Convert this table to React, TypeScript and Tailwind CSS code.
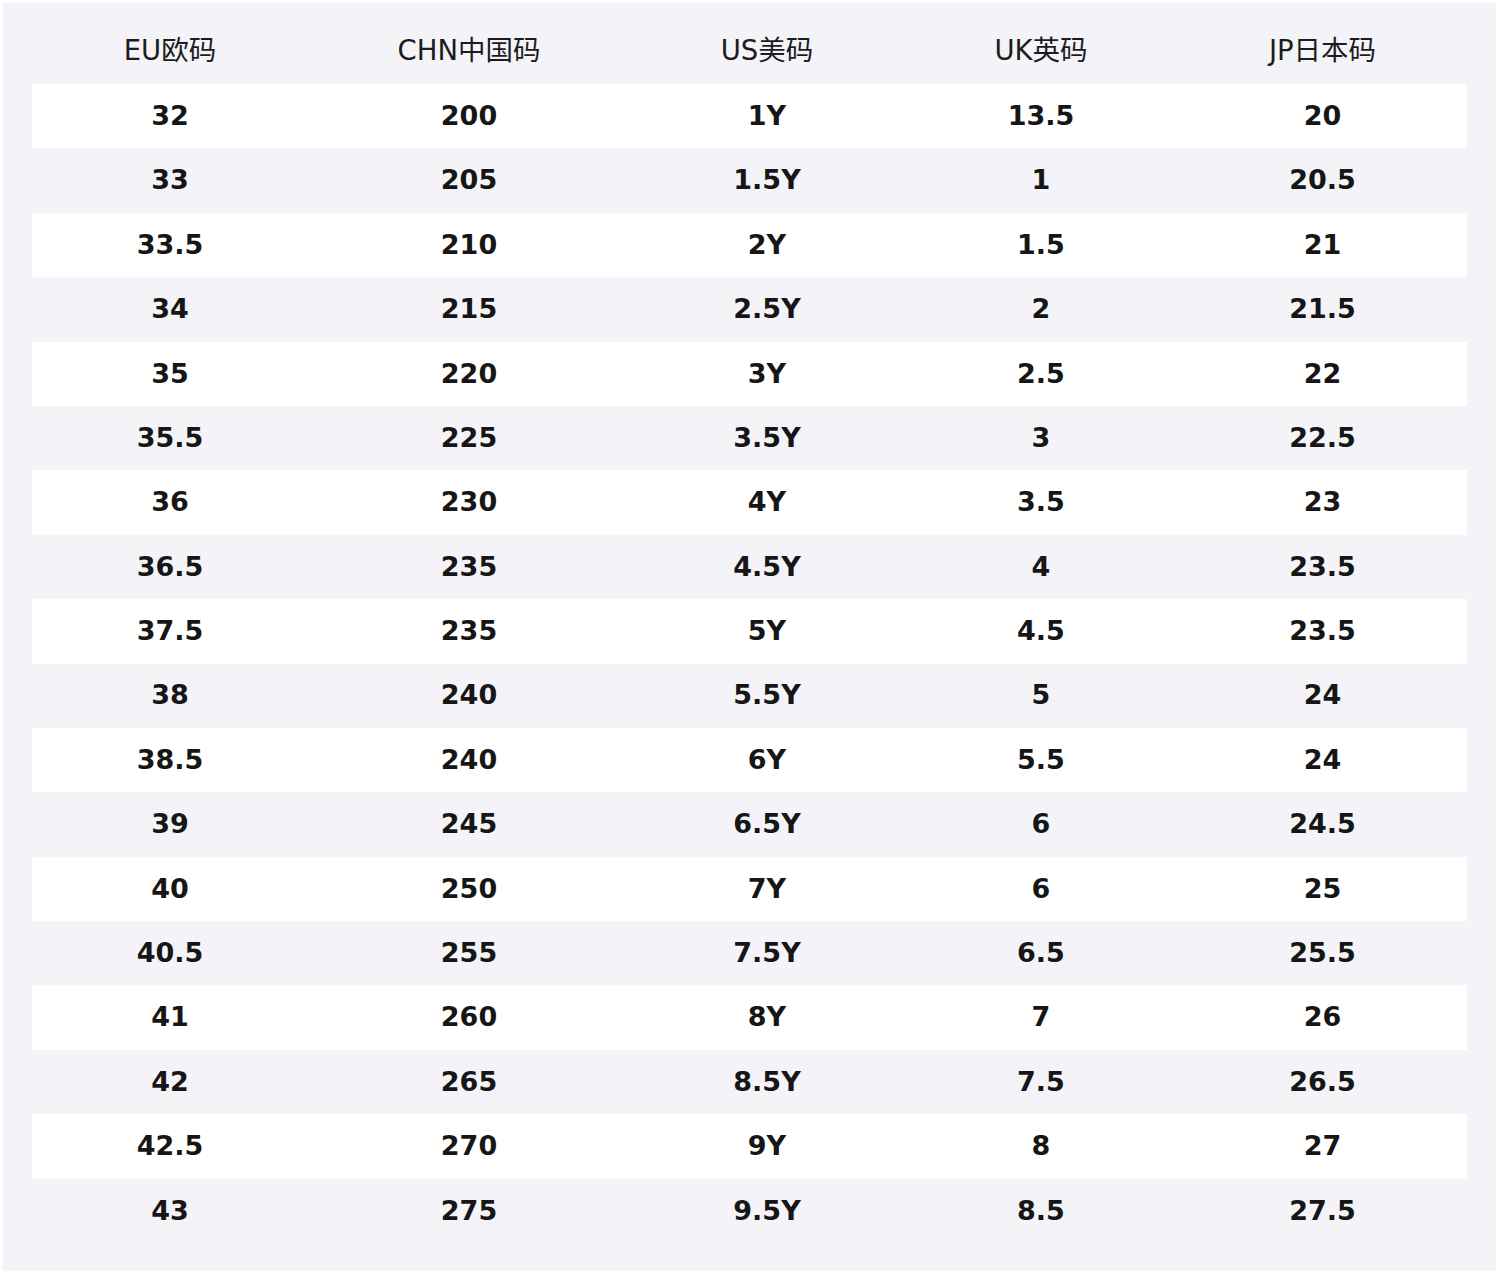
import React from "react";

const headers = ["EU欧码", "CHN中国码", "US美码", "UK英码", "JP日本码"];
const rows: string[][] = [
  ["32", "200", "1Y", "13.5", "20"],
  ["33", "205", "1.5Y", "1", "20.5"],
  ["33.5", "210", "2Y", "1.5", "21"],
  ["34", "215", "2.5Y", "2", "21.5"],
  ["35", "220", "3Y", "2.5", "22"],
  ["35.5", "225", "3.5Y", "3", "22.5"],
  ["36", "230", "4Y", "3.5", "23"],
  ["36.5", "235", "4.5Y", "4", "23.5"],
  ["37.5", "235", "5Y", "4.5", "23.5"],
  ["38", "240", "5.5Y", "5", "24"],
  ["38.5", "240", "6Y", "5.5", "24"],
  ["39", "245", "6.5Y", "6", "24.5"],
  ["40", "250", "7Y", "6", "25"],
  ["40.5", "255", "7.5Y", "6.5", "25.5"],
  ["41", "260", "8Y", "7", "26"],
  ["42", "265", "8.5Y", "7.5", "26.5"],
  ["42.5", "270", "9Y", "8", "27"],
  ["43", "275", "9.5Y", "8.5", "27.5"],
];

const grid = "grid grid-cols-[276px_322px_274px_274px_289px]";

export default function App() {
  return (
    <div className="w-[1500px] h-[1275px] bg-white p-[3px] [font-family:'DejaVu_Sans','Noto_Sans_CJK_SC',sans-serif]">
      <div className="w-[1493px] h-[1268px] bg-[#f3f3f8] pt-[17px] px-[29px]">
        <div className={`${grid} h-[64px] items-center text-[27.5px] text-[#1c1c1c]`}>
          {headers.map((h) => (
            <div key={h} className="text-center leading-none pb-[2px]">{h}</div>
          ))}
        </div>
        {rows.map((r, i) => (
          <div
            key={i}
            className={`${grid} h-[64.4px] items-center text-[27px] font-bold text-[#161616] ${i % 2 === 0 ? "bg-white" : "bg-transparent"}`}
          >
            {r.map((c, j) => (
              <div key={j} className="text-center">{c}</div>
            ))}
          </div>
        ))}
      </div>
    </div>
  );
}
